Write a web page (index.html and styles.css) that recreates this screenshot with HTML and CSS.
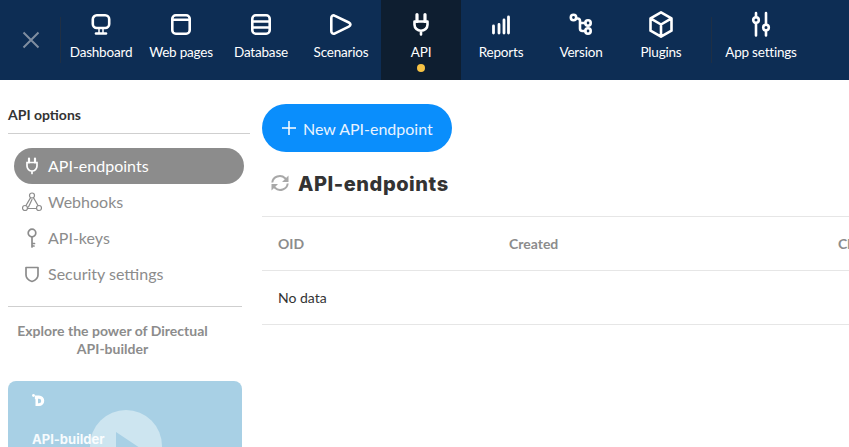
FILE: index.html
```html
<!DOCTYPE html>
<html lang="en">
<head>
<meta charset="utf-8">
<title>API-endpoints</title>
<link rel="stylesheet" href="styles.css">
</head>
<body>
<header class="topbar">
  <div class="closewrap">
    <button class="close" aria-label="Close">
      <svg width="18" height="18" viewBox="0 0 18 18"><path d="M1.500 1.500l15 15M16.500 1.500l-15 15" stroke="#7f8da0" stroke-width="2" fill="none"/></svg>
    </button>
  </div>
  <nav class="nav">
    <a class="item">
      <svg class="ico" viewBox="0 0 24 24"><rect x="3.800" y="2.300" width="16.400" height="12.700" rx="4"/><path d="M7 20.500h10"/><path d="M10 16v4M14 16v4" stroke-width="1.500"/></svg>
      <span>Dashboard</span>
    </a>
    <a class="item">
      <svg class="ico" viewBox="0 0 24 24"><rect x="3.300" y="2.300" width="17.400" height="18.400" rx="3.500"/><path d="M3.300 6.800h17.400"/></svg>
      <span>Web pages</span>
    </a>
    <a class="item">
      <svg class="ico" viewBox="0 0 24 24"><rect x="3.300" y="2.300" width="17.400" height="18.400" rx="3.500"/><path d="M3.300 8.500h17.400M3.300 14.500h17.400"/></svg>
      <span>Database</span>
    </a>
    <a class="item">
      <svg class="ico" viewBox="0 0 24 24"><path d="M2.300 5c0-2.300 1.800-3.200 3.700-2.200l13.800 6.700c2.200 1.100 2.200 3 0 4.100L6 20.300c-1.900 1-3.700.1-3.700-2.200z"/></svg>
      <span>Scenarios</span>
    </a>
    <a class="item active">
      <svg class="ico" viewBox="0 0 24 24"><path d="M8 1.500v7M16 1.500v7" stroke-width="3.200"/><path d="M5.500 8.500h13v3.300a6.500 6 0 0 1-13 0zM12 18v3.500"/></svg>
      <span>API</span>
      <i class="dot"></i>
    </a>
    <a class="item">
      <svg class="ico" viewBox="0 0 24 24"><path d="M4.500 13v7M10 11.500V20M15 7v13M19.500 4v16" stroke-width="2.800"/></svg>
      <span>Reports</span>
    </a>
    <a class="item">
      <svg class="ico" viewBox="0 0 24 24"><circle cx="4.500" cy="4.500" r="2.700"/><circle cx="19" cy="10" r="2.700"/><circle cx="19" cy="18" r="2.700"/><path d="M7.200 5.500h1.300q2.500 0 2.500 2.500v7.500q0 2.500 2.500 2.500h2.800M11 10h5.300"/></svg>
      <span>Version</span>
    </a>
    <a class="item">
      <svg class="ico" viewBox="0 0 24 24"><path d="M12 -.7l10.500 6v12.400l-10.500 6-10.500-6V5.300zM1.500 5.300L12 11.500l10.500-6.200M12 11.500v12"/></svg>
      <span>Plugins</span>
    </a>
    <a class="item wide">
      <svg class="ico" viewBox="0 0 24 24"><path d="M7 0v4M7 10v12.500M17 0v11.500M17 17.500v5"/><circle cx="7" cy="7" r="2.800"/><circle cx="17" cy="14.500" r="2.800"/></svg>
      <span>App settings</span>
    </a>
  </nav>
</header>

<div class="page">
  <aside class="side">
    <h3 class="side-title">API options</h3>
    <ul class="menu">
      <li class="menu-item current">
        <svg class="mico" viewBox="0 0 20 20"><path d="M7 2.500v4M13 2.500v4" stroke-width="2.200"/><path d="M5 6.500h10v3.500a5 5 0 0 1-10 0zM10 15v2.500"/></svg>
        <span>API-endpoints</span>
      </li>
      <li class="menu-item">
        <svg class="mico" viewBox="0 0 20 20"><circle cx="10" cy="3.500" r="2.500" stroke-width="1.200"/><circle cx="3" cy="16" r="2.500" stroke-width="1.200"/><circle cx="17" cy="16" r="2.500" stroke-width="1.200"/><path d="M8.600 5.600L4 13.500M11.400 5.600L16 13.500M5.500 16.500h9M10 7.500L6.500 15" stroke-width="1.200"/></svg>
        <span>Webhooks</span>
      </li>
      <li class="menu-item">
        <svg class="mico" viewBox="0 0 20 20"><circle cx="10" cy="5" r="3.800"/><path d="M10 9v10M10 15.500h2.500M10 18h2"/></svg>
        <span>API-keys</span>
      </li>
      <li class="menu-item">
        <svg class="mico" viewBox="0 0 20 20"><path d="M4 3.500h12V11q0 4.500-6 6.500-6-2-6-6.500z" stroke-linejoin="round"/></svg>
        <span>Security settings</span>
      </li>
    </ul>
    <hr class="rule">
    <p class="promo">Explore the power of Directual API-builder</p>
    <div class="video">
      <svg class="vlogo" width="13" height="13" viewBox="0 0 13 13"><path fill="#fff" fill-rule="evenodd" d="M3 1.500h4a5.200 5.200 0 0 1 0 10.500H3.500V5.500L2.800 4.500zM6 4.800v4.400h1a2.200 2.200 0 0 0 0-4.400z"/><circle cx="1.500" cy="1.500" r="1.400" fill="#fff"/></svg>
      <span class="vtitle">API-builder</span>
      <span class="vplay"><i class="vtri"></i></span>
    </div>
  </aside>

  <main class="main">
    <button class="new">
      <svg width="14" height="14" viewBox="0 0 14 14"><path d="M7 0v14M0 7h14" stroke="#fff" stroke-width="1.500"/></svg>
      New API-endpoint
    </button>
    <h1 class="title">
      <svg class="refresh" viewBox="0 0 18 18"><path d="M1.300 8.500a7.500 7 0 0 1 12.800-4.300l2.400 2.300M16.700 9.500a7.500 7 0 0 1-12.800 4.300l-2.400-2.300" fill="none" stroke="#a8a8a8" stroke-width="2"/><path d="M17.500 1.500v6.500H11zM.5 16.500V10H7z" fill="#a8a8a8"/></svg>
      <span>API-endpoints</span>
    </h1>
    <div class="table">
      <div class="row head"><span>OID</span><span>Created</span><span>Client</span></div>
      <div class="row"><span class="empty">No data</span></div>
    </div>
  </main>
</div>
</body>
</html>
```

FILE: styles.css
```css
* { box-sizing: border-box; }
html, body { margin: 0; height: 100%; overflow: hidden; }
body { font-family: Lato, "Liberation Sans", sans-serif; background: #fff; color: #333; }

.topbar { display: flex; height: 80px; background: #0d2d54; }
.closewrap { width: 61px; flex: none; padding-top: 17px; }
.close { display: flex; align-items: center; justify-content: center; width: 61px; height: 46px; padding: 0 0 0 1px; background: none; border: 0; border-right: 1px solid #1f2f44; }
.nav { display: flex; flex: 1; }
.item { position: relative; width: 80px; display: flex; flex-direction: column; align-items: center; padding-top: 13px; color: #fff; font-size: 13.500px; line-height: 17px; white-space: nowrap; letter-spacing: -0.2px; }
.item.active { background: #0e1e30; }
.item.wide { width: 100px; margin-left: 10px; }
.item.wide::before { content: ""; position: absolute; left: 0; top: 17px; height: 46px; width: 1px; background: #1f2f44; }
.ico { width: 24px; height: 24px; margin-bottom: 7px; overflow: visible; fill: none; stroke: #fff; stroke-width: 2.600; stroke-linecap: round; stroke-linejoin: round; }
.dot { position: absolute; left: 36px; top: 64px; width: 8px; height: 8px; border-radius: 50%; background: #f6c244; }

.page { display: flex; }
.side { width: 250px; padding: 24px 0 0 8px; flex: none; }
.side-title { margin: 0; height: 30px; font-size: 14px; line-height: 22px; font-weight: 700; color: #333; border-bottom: 1px solid #cfcfcf; }
.menu { list-style: none; margin: 14px 0 0; padding: 0 6px; width: 242px; }
.menu-item { height: 36px; display: flex; align-items: center; gap: 6px; padding: 0 0 2px 8px; border-radius: 18px; font-size: 16px; color: #8c8c8c; }
.menu-item.current { background: #8c8c8c; color: #fff; }
.mico { width: 20px; height: 20px; margin-top: 2px; fill: none; stroke: currentColor; stroke-width: 1.700; stroke-linecap: round; flex: none; }
.rule { width: 234px; margin: 14px 0 0; border: 0; border-top: 1px solid #cfcfcf; }
.promo { width: 209px; margin: 15px 0 0; font-size: 14px; line-height: 18px; font-weight: 700; color: #8c8c8c; text-align: center; }
.video { position: relative; width: 234px; height: 66px; margin-top: 23px; background: #a8d0e5; border-radius: 8px 8px 0 0; overflow: hidden; }
.vlogo { position: absolute; left: 24px; top: 13px; }
.vtitle { position: absolute; left: 24px; top: 51px; font-family: Inter, sans-serif; font-size: 13px; font-weight: 700; color: #fff; line-height: 14px; z-index: 1; opacity: .9; }
.vplay { position: absolute; left: 82px; top: 29px; width: 72px; height: 72px; border-radius: 50%; background: #cde5f0; }
.vtri { position: absolute; left: 26px; top: 22px; width: 0; height: 0; border-left: 24px solid #a8d0e5; border-top: 16px solid transparent; border-bottom: 16px solid transparent; }

.main { flex: 1; min-width: 0; margin-left: 12px; padding-top: 24px; overflow: hidden; }
.new { display: flex; align-items: center; gap: 7px; width: 190px; height: 48px; padding: 0 0 0 20px; border: 0; border-radius: 24px; background: #0a8efc; color: #e8f3ff; font-family: Lato, sans-serif; font-size: 16px; white-space: nowrap; }
.title { display: flex; align-items: center; gap: 9px; margin: 18px 0 0 9px; height: 26px; font-family: Inter, sans-serif; font-size: 20px; font-weight: 800; letter-spacing: .55px; color: #333; line-height: 26px; }
.title span { position: relative; top: 1px; }
.refresh { width: 18px; height: 18px; }
.table { margin-top: 20px; width: 587px; border-top: 1px solid #e6e6e6; }
.row { display: grid; grid-template-columns: 231px 329px 100px; align-items: center; height: 54px; padding-left: 16px; border-bottom: 1px solid #e6e6e6; font-size: 14px; }
.head { font-weight: 700; color: #8c8c8c; }
.empty { color: #333; white-space: nowrap; }
```
